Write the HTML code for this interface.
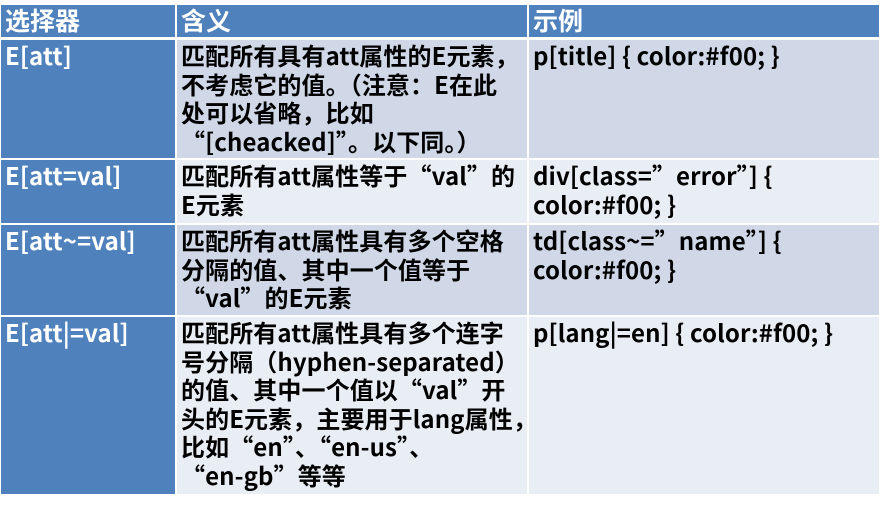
<!DOCTYPE html>
<html><head><meta charset="utf-8"><style>
body{margin:0;width:883px;height:507px;background:#fff;overflow:hidden;position:relative;font-family:"Noto Sans CJK SC","Liberation Sans",sans-serif;font-weight:bold;font-size:24px;}
.c{position:absolute;box-sizing:border-box;padding:1px 0 0 4px;line-height:28.5px;white-space:nowrap;color:#000;letter-spacing:0.1px}
.h{background:#4f81bd;color:#fff;font-size:25px;padding-top:0;line-height:30px;letter-spacing:0}
.k{background:#4f81bd;color:#fff}
.a{background:#d0d8e8}
.b{background:#e9edf4}
</style></head><body>
<div class="c h" style="left:1px;top:5px;width:174px;height:32px">选择器</div>
<div class="c h" style="left:177px;top:5px;width:350px;height:32px">含义</div>
<div class="c h" style="left:529px;top:5px;width:350px;height:32px">示例</div>

<div class="c k" style="left:1px;top:40px;width:174px;height:118px">E[att]</div>
<div class="c a" style="left:177px;top:40px;width:350px;height:118px">匹配所有具有att属性的E元素，<br>不考虑它的值。（注意：E在此<br>处可以省略，比如<br>“[cheacked]”。以下同。）</div>
<div class="c a" style="left:529px;top:40px;width:350px;height:118px">p[title] { color:#f00; }</div>

<div class="c k" style="left:1px;top:160px;width:174px;height:63px">E[att=val]</div>
<div class="c b" style="left:177px;top:160px;width:350px;height:63px">匹配所有att属性等于“val”的<br>E元素</div>
<div class="c b" style="left:529px;top:160px;width:350px;height:63px">div[class=”error”] {<br>color:#f00; }</div>

<div class="c k" style="left:1px;top:225px;width:174px;height:90px">E[att~=val]</div>
<div class="c a" style="left:177px;top:225px;width:350px;height:90px">匹配所有att属性具有多个空格<br>分隔的值、其中一个值等于<br>“val”的E元素</div>
<div class="c a" style="left:529px;top:225px;width:350px;height:90px">td[class~=”name”] {<br>color:#f00; }</div>

<div class="c k" style="left:1px;top:317px;width:174px;height:177px">E[att|=val]</div>
<div class="c b" style="left:177px;top:317px;width:350px;height:177px">匹配所有att属性具有多个连字<br>号分隔（hyphen-separated）<br>的值、其中一个值以“val”开<br>头的E元素，主要用于lang属性，<br>比如“en”、“en-us”、<br>“en-gb”等等</div>
<div class="c b" style="left:529px;top:317px;width:350px;height:177px">p[lang|=en] { color:#f00; }</div>
</body></html>
